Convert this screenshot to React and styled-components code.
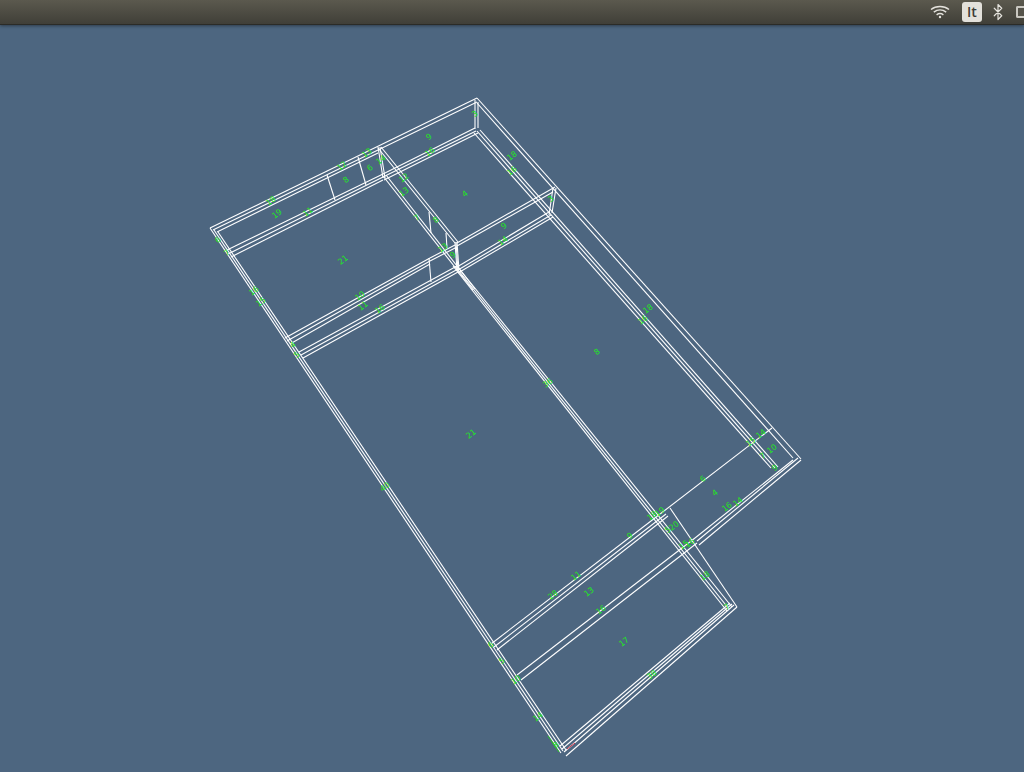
import React from 'react'
import styled, { createGlobalStyle } from 'styled-components'
import { Bluetooth } from 'lucide-react'

const GlobalStyle = createGlobalStyle`
  html, body {
    margin: 0;
    padding: 0;
    height: 100%;
    overflow: hidden;
    background: #4d6680;
  }
`

// wall outlines, in screen pixels: [x1, y1, x2, y2]
const WALLS = [
  // outer top edge, left room to apex
  [210, 228, 477, 98], [213, 230, 378, 150], [217, 232, 378, 153], [378, 150, 477, 102],
  // top wall floor lines
  [225, 251, 383, 174], [228, 254, 383, 177], [231, 257, 383, 180],
  [383, 174, 475, 128], [383, 177, 476, 131], [384, 180, 478, 133],
  // long left wall
  [210, 228, 561, 753], [214, 230, 563, 751], [218, 232, 566, 750],
  // right wall
  [477, 98, 801, 459], [477, 103, 793, 458],
  [474, 133, 771, 468], [477, 131, 775, 468], [480, 130, 778, 467],
  // front wall at the bottom
  [737, 607, 566, 756], [734, 605, 564, 752], [732, 604, 562, 749], [730, 603, 560, 746],
  // central wall
  [378, 148, 455, 243], [381, 147, 458, 242],
  [383, 176, 473, 290], [386, 175, 475, 289],
  [453, 266, 727, 611], [455, 266, 729, 609], [457, 266, 732, 607],
  [670, 508, 737, 607],
  // cross wall, upper part
  [285, 338, 430, 258], [287, 341, 430, 261], [290, 344, 430, 264],
  [430, 258, 455, 245], [430, 261, 457, 247],
  [457, 243, 555, 187], [457, 246, 553, 192],
  [299, 352, 457, 266], [301, 355, 458, 269], [303, 358, 458, 272],
  [457, 267, 549, 212], [458, 270, 551, 215], [458, 273, 553, 217],
  // bottom cross wall A
  [491, 644, 664, 511], [494, 647, 666, 514], [497, 650, 668, 516],
  [664, 511, 772, 428],
  // bottom cross wall B
  [517, 675, 695, 538], [521, 680, 697, 543],
  [695, 538, 793, 460], [697, 541, 798, 458], [699, 545, 801, 460],
  // corner posts and partitions
  [327, 175, 335, 200], [358, 157, 366, 185], [378, 147, 383, 178], [380, 147, 385, 178],
  [475, 100, 475, 129], [478, 102, 478, 128],
  [553, 188, 549, 215], [556, 188, 552, 213],
  [429, 212, 431, 233], [446, 233, 447, 248],
  [455, 242, 457, 270], [456, 242, 458, 270], [457, 242, 459, 270],
  [429, 258, 431, 282],
]

const LABELS = [
  [271, 201, '18'], [277, 214, '19'], [308, 212, '11'], [342, 166, '12'], [346, 180, '8'],
  [367, 153, '13'], [370, 168, '6'], [381, 160, '14'], [429, 137, '9'], [430, 152, '16'],
  [475, 114, '3'], [512, 156, '18'], [512, 171, '16'], [465, 194, '4'], [404, 178, '12'],
  [404, 192, '13'], [417, 218, '7'], [436, 220, '8'], [504, 226, '9'], [503, 241, '14'],
  [551, 199, '3'], [343, 260, '21'], [360, 296, '10'], [363, 306, '11'], [380, 309, '16'],
  [254, 291, '16'], [261, 302, '15'], [218, 240, '6'], [227, 253, '7'], [293, 345, '4'],
  [297, 355, '5'], [453, 255, '9'], [443, 248, '13'], [648, 309, '18'], [643, 320, '16'],
  [597, 352, '8'], [548, 383, '36'], [471, 434, '21'], [385, 487, '40'], [761, 434, '14'],
  [751, 442, '15'], [763, 456, '7'], [772, 449, '10'], [775, 468, '9'], [703, 479, '6'],
  [715, 493, '4'], [727, 507, '16'], [738, 502, '14'], [630, 536, '9'], [652, 516, '18'],
  [660, 512, '19'], [668, 530, '5'], [674, 526, '20'], [684, 545, '15'], [690, 543, '16'],
  [705, 576, '18'], [576, 576, '11'], [553, 595, '28'], [589, 592, '13'], [601, 610, '16'],
  [624, 642, '17'], [652, 675, '38'], [727, 607, '7'], [491, 645, '6'], [502, 661, '5'],
  [516, 680, '10'], [538, 717, '14'], [556, 745, '8'],
]

const Page = styled.div`
  display: flex;
  flex-direction: column;
  width: 1024px;
  height: 772px;
  overflow: hidden;
  background: #4d6680;
`

const TopBar = styled.header`
  display: flex;
  align-items: center;
  justify-content: flex-end;
  flex: none;
  box-sizing: border-box;
  height: 25px;
  background: linear-gradient(#5b594e, #403f38);
  border-bottom: 1px solid #2b2b27;
  box-shadow: 0 1px 3px rgba(20, 25, 30, 0.55);
  z-index: 1;
`

const TrayIcon = styled.div`
  display: flex;
  align-items: center;
  justify-content: center;
  flex: none;
  width: ${(p) => p.$width}px;
  height: 24px;
  color: #e4e2dc;
`

const KeyboardBadge = styled.div`
  display: flex;
  align-items: center;
  justify-content: center;
  width: 20px;
  height: 20px;
  border-radius: 3px;
  background: #e3e1db;
  color: #3c3b35;
  font: 600 14px/20px "Open Sans", sans-serif;
`

const BatteryStub = styled.div`
  box-sizing: border-box;
  width: 8px;
  height: 12px;
  margin-left: 3px;
  border: 2px solid #c9c7c0;
  border-right: none;
  border-radius: 2px 0 0 2px;
  background: #55534a;
`

const Scene = styled.svg`
  display: block;
  flex: 1;
  width: 1024px;
`

const Wall = styled.line`
  stroke: #ffffff;
  stroke-width: 1.1;
`

const Label = styled.text`
  fill: #22e522;
  font: 8px "DejaVu Sans", sans-serif;
  text-anchor: middle;
  dominant-baseline: middle;
`

function WifiIcon() {
  return (
    <svg width="20" height="14" viewBox="0 0 20 14" fill="none" stroke="#e4e2dc" strokeWidth="1.5">
      <path d="M1 4.5 C6 0.5 14 0.5 19 4.5" />
      <path d="M3.8 7.2 C7.5 4.4 12.5 4.4 16.2 7.2" />
      <path d="M6.6 9.8 C8.6 8.4 11.4 8.4 13.4 9.8" />
      <circle cx="10" cy="12" r="1.2" fill="#e4e2dc" stroke="none" />
    </svg>
  )
}

export default function App() {
  return (
    <Page>
      <GlobalStyle />
      <TopBar>
        <TrayIcon $width={20}><WifiIcon /></TrayIcon>
        <TrayIcon $width={12} />
        <TrayIcon $width={20}><KeyboardBadge>It</KeyboardBadge></TrayIcon>
        <TrayIcon $width={31}><Bluetooth size={18} strokeWidth={1.6} /></TrayIcon>
        <BatteryStub />
      </TopBar>
      <Scene viewBox="0 25 1024 747">
        {WALLS.map(([x1, y1, x2, y2], i) => (
          <Wall key={i} x1={x1} y1={y1} x2={x2} y2={y2} />
        ))}
        <line x1="567" y1="749" x2="575" y2="743" stroke="#c2263c" strokeWidth="1" />
        <line x1="548" y1="736" x2="559" y2="752" stroke="#25c425" strokeWidth="1" />
        {LABELS.map(([x, y, text], i) => (
          <Label key={i} x={x} y={y} transform={`rotate(-37 ${x} ${y})`}>{text}</Label>
        ))}
      </Scene>
    </Page>
  )
}
